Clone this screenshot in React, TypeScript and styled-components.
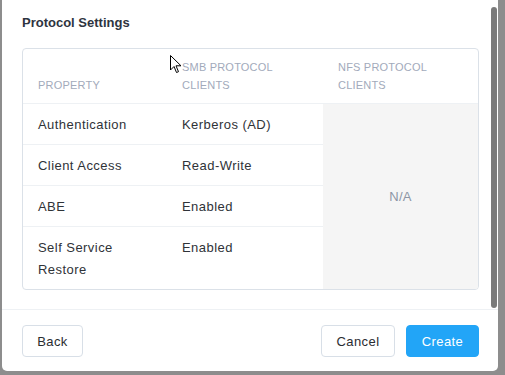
import React from 'react';
import styled, { createGlobalStyle } from 'styled-components';

const GlobalStyle = createGlobalStyle`
  html, body {
    margin: 0;
    padding: 0;
    background: #8d8d8d;
    font-family: 'Liberation Sans', Arial, sans-serif;
    -webkit-font-smoothing: antialiased;
  }
`;

const Backdrop = styled.div`
  width: 505px;
  height: 375px;
  overflow: hidden;
  position: relative;
`;

const Modal = styled.div`
  position: relative;
  margin-left: 2px;
  width: 496px;
  height: 371px;
  background: #fff;
  border-radius: 0 0 5px 5px;
  display: flex;
  flex-direction: column;
`;

const Body = styled.div`
  flex: 1;
  padding: 14px 19px 0 20px;
`;

const Title = styled.h3`
  margin: 0;
  font-size: 13px;
  line-height: 18px;
  font-weight: 600;
  color: #2e3440;
`;

const Card = styled.div`
  margin-top: 16px;
  border: 1px solid #dbe1e8;
  border-radius: 4px;
  display: grid;
  grid-template-columns: 144px 156px 1fr;
  overflow: hidden;
`;

const HeadCell = styled.div`
  padding: 9px 15px;
  font-size: 11px;
  line-height: 18px;
  letter-spacing: 0.2px;
  color: #a2aabb;
  text-transform: uppercase;
  border-bottom: 1px solid #eef1f4;
  display: flex;
  align-items: flex-end;
`;

const Cell = styled.div<{ $last?: boolean }>`
  padding: 10px 15px 8px;
  font-size: 13px;
  line-height: 22px;
  letter-spacing: 0.45px;
  color: #2f3338;
  border-bottom: ${({ $last }) => ($last ? 'none' : '1px solid #eef1f4')};
`;

const EmptyColumn = styled.div`
  grid-column: 3;
  grid-row: 2 / span 4;
  background: #f5f5f5;
  display: flex;
  align-items: center;
  justify-content: center;
  font-size: 13px;
  letter-spacing: 0.3px;
  color: #8c95a5;
`;

const Footer = styled.div`
  border-top: 1px solid #eef1f4;
  padding: 15px 19px 14px 20px;
  display: flex;
  align-items: center;
  gap: 11px;
`;

const Spacer = styled.div`
  flex: 1;
`;

const Button = styled.button<{ $primary?: boolean; $w: number }>`
  width: ${({ $w }) => $w}px;
  height: 32px;
  border-radius: 4px;
  font-family: inherit;
  font-size: 13px;
  letter-spacing: 0.4px;
  cursor: pointer;
  border: 1px solid ${({ $primary }) => ($primary ? '#22a5f7' : '#d8dfe7')};
  background: ${({ $primary }) => ($primary ? '#22a5f7' : '#fff')};
  color: ${({ $primary }) => ($primary ? '#fff' : '#2a2d31')};
`;

const ScrollThumb = styled.div`
  position: absolute;
  right: 1px;
  top: 7px;
  width: 6px;
  height: 301px;
  border-radius: 3px;
  background: #7a7a7a;
`;

const Pointer = styled.svg`
  position: absolute;
  left: 170px;
  top: 55px;
`;

const rows: [string, string][] = [
  ['Authentication', 'Kerberos (AD)'],
  ['Client Access', 'Read-Write'],
  ['ABE', 'Enabled'],
  ['Self Service Restore', 'Enabled'],
];

const App = () => {
  return (
    <Backdrop>
      <GlobalStyle />
      <Modal>
        <Body>
          <Title>Protocol Settings</Title>
          <Card>
            <HeadCell>Property</HeadCell>
            <HeadCell>SMB Protocol Clients</HeadCell>
            <HeadCell>NFS Protocol Clients</HeadCell>
            {rows.map(([name, value], i) => (
              <React.Fragment key={name}>
                <Cell $last={i === rows.length - 1} style={{ gridColumn: 1 }}>
                  {name === 'Self Service Restore' ? (
                    <>
                      Self Service
                      <br />
                      Restore
                    </>
                  ) : (
                    name
                  )}
                </Cell>
                <Cell $last={i === rows.length - 1} style={{ gridColumn: 2 }}>
                  {value}
                </Cell>
              </React.Fragment>
            ))}
            <EmptyColumn>N/A</EmptyColumn>
          </Card>
        </Body>
        <Footer>
          <Button $w={61}>Back</Button>
          <Spacer />
          <Button $w={74}>Cancel</Button>
          <Button $w={73} $primary>
            Create
          </Button>
        </Footer>
        <ScrollThumb />
      </Modal>
      <Pointer width="12" height="19" viewBox="0 0 12 19">
        <path
          d="M0.5 0.5 L0.5 15 L4 11.5 L6.5 17.5 L8.5 16.7 L6 10.8 L11 10.8 Z"
          fill="#fff"
          stroke="#000"
          strokeWidth="1"
          strokeLinejoin="miter"
        />
      </Pointer>
    </Backdrop>
  );
};

export default App;
